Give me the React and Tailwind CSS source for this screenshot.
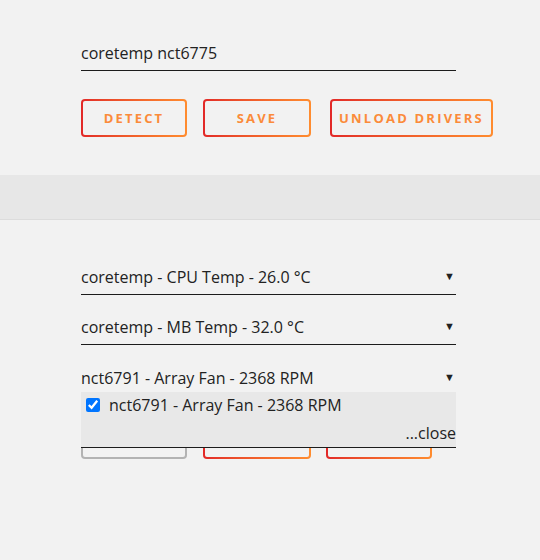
import React, { useState } from "react";

const font = { fontFamily: '"Open Sans", "Noto Sans", sans-serif' };

function GradButton({ children, width, muted }) {
    return (
        <div
            className={`rounded-[4px] p-[2px] ${muted ? "bg-[#b3b3b3]" : "bg-gradient-to-r from-[#e22828] to-[#ff8c2f]"}`}
            style={{ width }}
        >
            <div className="flex h-[34px] items-center justify-center rounded-[2px] bg-[#f2f2f2] pt-[2px]">
                <span className="text-[13px] font-bold uppercase tracking-[2.2px] text-[#fb8b3a]">
                    {children}
                </span>
            </div>
        </div>
    );
}

function SensorSelect({ label, open }) {
    return (
        <div
            className={`flex h-[30px] w-[375px] items-end justify-between pb-[5px] text-[16px] leading-[24px] text-[#222] ${open ? "" : "border-b border-[#1c1c1c]"}`}
        >
            <span>{label}</span>
            <span className="mb-[1px] mr-[1px] text-[11px]">▼</span>
        </div>
    );
}

export default function App() {
    const [checked, setChecked] = useState(true);

    return (
        <div className="min-h-[560px] w-[540px] bg-[#f2f2f2]" style={font}>
            {/* drivers */}
            <div className="pl-[81px] pt-[41px]">
                <div className="flex h-[30px] w-[375px] items-end border-b border-[#1c1c1c] pb-[5px] text-[16px] leading-[24px] text-[#222]">
                    coretemp nct6775
                </div>
                <div className="mt-[28px] flex gap-[16px]">
                    <GradButton width={106}>Detect</GradButton>
                    <GradButton width={108}>Save</GradButton>
                    <div className="ml-[3px]">
                        <GradButton width={163}>Unload Drivers</GradButton>
                    </div>
                </div>
            </div>

            <div className="mt-[38px] h-[45px] border-b border-[#dcdcdc] bg-[#e7e7e7]" />

            {/* sensors */}
            <div className="pl-[81px] pt-[45px]">
                <div className="flex flex-col gap-[20px]">
                    <SensorSelect label="coretemp - CPU Temp - 26.0 °C" />
                    <SensorSelect label="coretemp - MB Temp - 32.0 °C" />
                    <div className="relative">
                        <SensorSelect label="nct6791 - Array Fan - 2368 RPM" open />
                        <div className="absolute left-0 top-[27px] z-10 w-[375px] border-b border-[#1c1c1c] bg-[#e8e8e8] pb-[2px] pt-[1px] text-[16px] leading-[24px] text-[#222]">
                            <label className="flex items-center gap-[9px] pl-[5px]">
                                <input
                                    type="checkbox"
                                    checked={checked}
                                    onChange={() => setChecked(!checked)}
                                    className="h-[14px] w-[14px] accent-[#0075ff]"
                                />
                                <span>nct6791 - Array Fan - 2368 RPM</span>
                            </label>
                            <div className="mt-[4px] text-right">...close</div>
                        </div>
                    </div>
                </div>
                <div className="mt-[26px] flex gap-[16px]">
                    <GradButton width={106} muted>Apply</GradButton>
                    <GradButton width={108}>Done</GradButton>
                    <div className="-ml-[1px]">
                        <GradButton width={106}>Reset</GradButton>
                    </div>
                </div>
            </div>
        </div>
    );
}
